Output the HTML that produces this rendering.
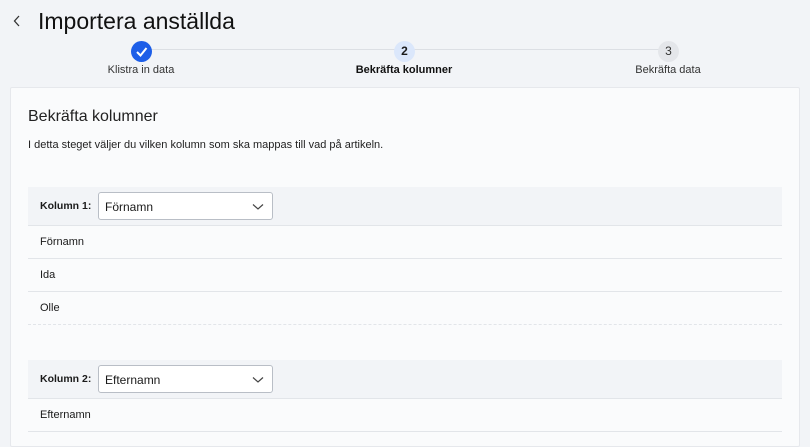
<!DOCTYPE html>
<html><head><style>
*{margin:0;padding:0;box-sizing:border-box}
body{width:810px;height:441px;overflow:hidden;background:#f2f4f7;font-family:"Liberation Sans",sans-serif;color:#1a1a1a;position:relative}
.abs{position:absolute}
h1{position:absolute;left:38px;top:8px;font-size:23px;font-weight:400;color:#111}
.line{position:absolute;top:49px;left:141px;width:527px;height:1px;background:#dcdfe4}
.c{position:absolute;top:41px;width:21px;height:21px;border-radius:50%;font-size:12px;font-weight:700;text-align:center;line-height:21px}
.lbl{position:absolute;top:64px;font-size:11px;transform:translateX(-50%);white-space:nowrap;color:#333}
.card{position:absolute;left:10px;top:87px;width:790px;height:360px;background:#fafbfc;border:1px solid #e6e8ec;border-radius:2px}
.hdr{position:absolute;left:28px;width:754px;height:39px;background:#f2f4f7;border-bottom:1px solid #e2e5e9}
.hdr b{position:absolute;left:12px;top:13px;font-size:10.5px}
.sel{position:absolute;left:70px;top:5px;width:175px;height:28px;background:#fff;border:1px solid #b9bec6;border-radius:3px;font-size:12px;padding:7px 6px}
.sel svg{position:absolute;right:8px;top:10px}
.row{position:absolute;left:28px;width:754px;height:33px;border-bottom:1px solid #e2e5e9;font-size:11px;padding:10px 12px}
</style></head><body>
<svg class="abs" style="left:13px;top:15px" width="8" height="12"><path d="M6 1 L1.5 6 L6 11" stroke="#333" stroke-width="1.3" fill="none"/></svg>
<h1>Importera anställda</h1>
<div class="line"></div>
<div class="c" style="left:131px;background:#1d5ee8;color:#fff"><svg width="21" height="21"><path d="M6 11 L9.5 14.5 L15.5 7" stroke="#fff" stroke-width="2" fill="none"/></svg></div>
<div class="c" style="left:394px;background:#dbe7fb;color:#1a1a1a">2</div>
<div class="c" style="left:658px;background:#e4e6ea;color:#333;font-weight:400">3</div>
<div class="lbl" style="left:141px">Klistra in data</div>
<div class="lbl" style="left:404px;font-weight:700;color:#111">Bekräfta kolumner</div>
<div class="lbl" style="left:668px">Bekräfta data</div>
<div class="card"></div>
<div class="abs" style="left:28px;top:108px;font-size:16px;color:#222">Bekräfta kolumner</div>
<div class="abs" style="left:28px;top:139px;font-size:11px;color:#222">I detta steget väljer du vilken kolumn som ska mappas till vad på artikeln.</div>
<div class="hdr" style="top:187px"><b>Kolumn 1:</b><div class="sel">Förnamn<svg width="12" height="8"><path d="M1 1.5 L6 6 L11 1.5" stroke="#444" stroke-width="1.2" fill="none"/></svg></div></div>
<div class="row" style="top:226px">Förnamn</div>
<div class="row" style="top:259px">Ida</div>
<div class="row" style="top:292px;border-bottom:1px dashed #e2e5e9">Olle</div>
<div class="hdr" style="top:360px"><b>Kolumn 2:</b><div class="sel">Efternamn<svg width="12" height="8"><path d="M1 1.5 L6 6 L11 1.5" stroke="#444" stroke-width="1.2" fill="none"/></svg></div></div>
<div class="row" style="top:399px">Efternamn</div>
</body></html>
